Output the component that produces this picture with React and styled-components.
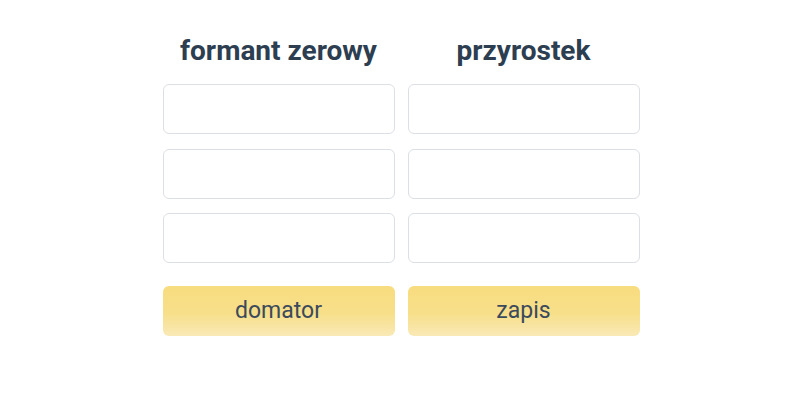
import styled, { createGlobalStyle } from 'styled-components'

const GlobalStyle = createGlobalStyle`
  body {
    margin: 0;
    background: #ffffff;
    font-family: Roboto, "Liberation Sans", sans-serif;
  }
`

const Page = styled.div`
  width: 800px;
  height: 400px;
  display: flex;
  justify-content: center;
  padding-top: 34px;
  box-sizing: border-box;
`

const Board = styled.div`
  display: grid;
  grid-template-columns: 232px 232px;
  column-gap: 13px;
  margin-left: 2px;
`

const Column = styled.div`
  display: flex;
  flex-direction: column;
`

const Heading = styled.h2`
  margin: 0 0 16px;
  height: 34px;
  line-height: 34px;
  text-align: center;
  font-size: 28px;
  font-weight: 700;
  color: #2c3e50;
`

const Field = styled.input`
  box-sizing: border-box;
  width: 100%;
  height: 50px;
  margin-bottom: 14.5px;
  border: 1px solid #dcdfe3;
  border-radius: 6px;
  background: #fff;
  outline: none;
`

const Word = styled.button`
  box-sizing: border-box;
  width: 100%;
  height: 50px;
  margin-top: 8px;
  border: none;
  border-radius: 6px;
  background: linear-gradient(180deg, #f8dc7f 0%, #f7df8a 55%, #f9e9b6 100%);
  color: #3b4a5c;
  font-family: Roboto, "Liberation Sans", sans-serif;
  font-size: 23px;
  cursor: pointer;
`

const columns = [
  { title: 'formant zerowy', word: 'domator' },
  { title: 'przyrostek', word: 'zapis' },
]

export default function App() {
  return (
    <Page>
      <GlobalStyle />
      <Board>
        {columns.map((c) => (
          <Column key={c.title}>
            <Heading>{c.title}</Heading>
            <Field />
            <Field />
            <Field />
            <Word>{c.word}</Word>
          </Column>
        ))}
      </Board>
    </Page>
  )
}
